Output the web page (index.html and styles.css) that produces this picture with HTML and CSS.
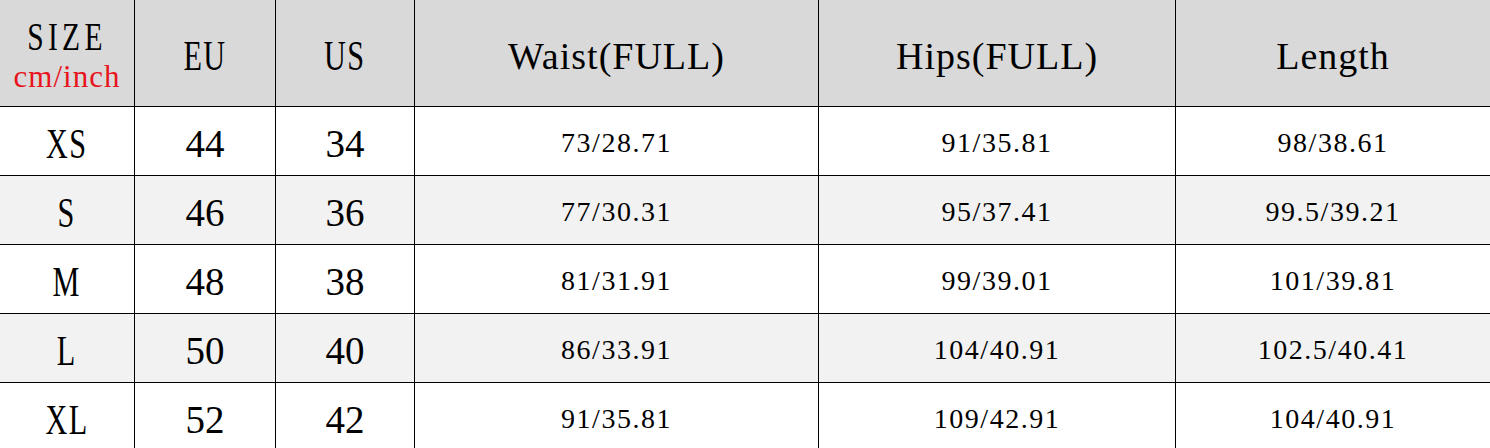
FILE: index.html
```html
<!DOCTYPE html>
<html>
<head>
<meta charset="utf-8">
<link rel="stylesheet" href="styles.css">
</head>
<body>
<table class="chart">
  <colgroup>
    <col class="c1"><col class="c2"><col class="c3"><col class="c4"><col class="c5"><col class="c6">
  </colgroup>
  <thead>
    <tr class="head">
      <th class="size-head"><span class="size-word narrow">SIZE</span><span class="unit">cm/inch</span></th>
      <th><span class="narrow">EU</span></th>
      <th><span class="narrow">US</span></th>
      <th>Waist(FULL)</th>
      <th>Hips(FULL)</th>
      <th>Length</th>
    </tr>
  </thead>
  <tbody>
    <tr><td class="big"><span class="narrow">XS</span></td><td class="big">44</td><td class="big">34</td><td>73/28.71</td><td>91/35.81</td><td>98/38.61</td></tr>
    <tr class="alt"><td class="big"><span class="narrow">S</span></td><td class="big">46</td><td class="big">36</td><td>77/30.31</td><td>95/37.41</td><td>99.5/39.21</td></tr>
    <tr><td class="big"><span class="narrow">M</span></td><td class="big">48</td><td class="big">38</td><td>81/31.91</td><td>99/39.01</td><td>101/39.81</td></tr>
    <tr class="alt"><td class="big"><span class="narrow">L</span></td><td class="big">50</td><td class="big">40</td><td>86/33.91</td><td>104/40.91</td><td>102.5/40.41</td></tr>
    <tr><td class="big"><span class="narrow">XL</span></td><td class="big">52</td><td class="big">42</td><td>91/35.81</td><td>109/42.91</td><td>104/40.91</td></tr>
  </tbody>
</table>
</body>
</html>
```
FILE: styles.css
```css
html, body {
  margin: 0;
  padding: 0;
  background: #ffffff;
}
.chart {
  border-collapse: separate;
  border-spacing: 0;
  table-layout: fixed;
  width: 1490px;
  font-family: "Liberation Serif", "Times New Roman", serif;
  color: #000;
}
.c1 { width: 135px; }
.c2 { width: 141px; }
.c3 { width: 139px; }
.c4 { width: 404px; }
.c5 { width: 357px; }
.c6 { width: 314px; }
.chart th,
.chart td {
  box-sizing: border-box;
  border-right: 1px solid #000;
  border-bottom: 1px solid #000;
  padding: 0;
  text-align: center;
  vertical-align: middle;
  font-weight: normal;
  white-space: nowrap;
}
.chart th:last-child,
.chart td:last-child {
  border-right: none;
}
.head th {
  background: #d9d9d9;
  height: 107px;
  font-size: 38px;
  letter-spacing: 1px;
  padding-top: 6px;
}
.narrow {
  display: inline-block;
  font-size: 42px;
  letter-spacing: 2px;
  transform: scaleX(0.72);
  transform-origin: center;
}
.head th.size-head {
  padding-top: 0;
  line-height: 1;
}
.size-word {
  display: block;
  font-size: 41px;
  letter-spacing: 6px;
  margin-top: 1px;
}
.unit {
  display: block;
  font-size: 31px;
  color: #e8141c;
  letter-spacing: 1px;
  margin-top: 4px;
}
.chart td {
  height: 69px;
  font-size: 28px;
  letter-spacing: 1.5px;
  padding-top: 3px;
}
.chart td.big {
  font-size: 39px;
  letter-spacing: 0;
  padding-top: 5px;
}
.alt td {
  background: #f2f2f2;
}
```
